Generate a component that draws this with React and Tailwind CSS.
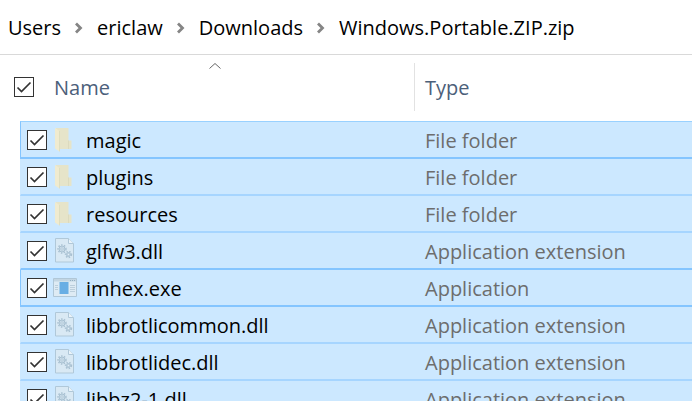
import { Fragment } from "react";

const crumbs = ["Users", "ericlaw", "Downloads", "Windows.Portable.ZIP.zip"];

const files = [
  { name: "magic", type: "File folder", kind: "folder", outlined: true },
  { name: "plugins", type: "File folder", kind: "folder" },
  { name: "resources", type: "File folder", kind: "folder" },
  { name: "glfw3.dll", type: "Application extension", kind: "dll" },
  { name: "imhex.exe", type: "Application", kind: "exe", outlined: true },
  { name: "libbrotlicommon.dll", type: "Application extension", kind: "dll" },
  { name: "libbrotlidec.dll", type: "Application extension", kind: "dll" },
  { name: "libbz2-1.dll", type: "Application extension", kind: "dll" },
];

function Checkbox({ label }) {
  return (
    <span className="relative block size-5 shrink-0">
      <input
        type="checkbox"
        defaultChecked
        aria-label={label}
        className="peer block size-5 appearance-none border border-[#333] bg-white"
      />
      <svg viewBox="0 0 20 20" className="pointer-events-none absolute inset-0 hidden size-5 peer-checked:block" aria-hidden="true">
        <path d="M3.5 10.5 7.5 14.5 16.5 5.5" fill="none" stroke="#333" strokeWidth="1.700" />
      </svg>
    </span>
  );
}

function FolderIcon() {
  return (
    <svg viewBox="0 0 24 26" className="h-[26px] w-6" aria-hidden="true">
      <path d="M3 1h12.500v12.500H18.500V22H6z" fill="#e6e4c9" />
      <path d="M15.500 13.500v8.500" stroke="#d8d7bd" strokeWidth="0.800" />
      <path d="M2 1 6.500 4v20.500L2 21.500z" fill="#f0ebcf" />
      <path d="M6.500 4v20.500" stroke="#dcdabd" strokeWidth="0.800" />
    </svg>
  );
}

function Gear({ x, y, r }) {
  return (
    <g transform={`translate(${x} ${y})`} fill="none" stroke="#a9c1d2">
      <circle r={r + 1} strokeWidth="1.400" strokeDasharray="1.500 1.400" />
      <circle r={r} strokeWidth="1" fill="#c9dce9" />
      <circle r="1.200" fill="#e1eff9" strokeWidth="0.800" />
    </g>
  );
}

function DllIcon() {
  return (
    <svg viewBox="0 0 24 26" className="h-[26px] w-6" aria-hidden="true">
      <path d="M2.500 .5h13l5 5v18.500h-18z" fill="#d9e9f4" stroke="#b0c8d9" />
      <path d="M15.500 .5v5h5" fill="#e9f3fa" stroke="#b0c8d9" />
      <Gear x={9} y={11} r={3} />
      <Gear x={15.500} y={16.500} r={2} />
    </svg>
  );
}

function ExeIcon() {
  return (
    <svg viewBox="0 0 24 26" className="h-[26px] w-6" aria-hidden="true">
      <path d="M.5 3.500h23v18H.5z" fill="#deebf4" stroke="#b0c7d7" />
      <path d="M1 4h22v2.500H1z" fill="#c3d6e3" />
      <path d="M17 5.500h1m1 0h1m1 0h1" stroke="#94afc2" />
      <path d="M6.500 7h9v12h-9z" fill="#69aee4" />
      <path d="M2 10.500h3m-3 2h3m-3 2h3m12-4h5m-5 2h5m-5 2h5m-5 2h5" stroke="#bccfdc" />
    </svg>
  );
}

const icons = { folder: FolderIcon, dll: DllIcon, exe: ExeIcon };

export default function App() {
  return (
    <main className="h-screen overflow-hidden bg-white font-['Open_Sans','Noto_Sans',sans-serif] text-xl leading-7 text-black">
      <nav aria-label="Path" className="flex h-[55px] items-center gap-3.5 border-b border-[#d9d9d9] pt-0.5 pl-2">
        {crumbs.map((crumb, i) => (
          <Fragment key={crumb}>
            {i > 0 && (
              <svg viewBox="0 0 8 12" className="h-3 w-2 shrink-0" aria-hidden="true">
                <path d="M1 1.500 5.500 6 1 10.500" fill="none" stroke="#858585" strokeWidth="2.800" />
              </svg>
            )}
            <a href="#path" className="whitespace-nowrap">{crumb}</a>
          </Fragment>
        ))}
      </nav>
      <table className="w-full table-fixed border-collapse">
        <thead>
          <tr className="h-[66px] text-[#4c607a]">
            <th scope="col" className="relative w-[414px] p-0 font-normal">
              <div className="flex items-center gap-5 pb-0.5 pl-3.5">
                <Checkbox label="Select all" />
                <span className="pt-0.5">Name</span>
              </div>
              <svg viewBox="0 0 12 6" className="absolute top-2 left-[209px] h-1.5 w-3" aria-hidden="true">
                <path d="M.5 5.500 6 .5l5.500 5" fill="none" stroke="#666" />
              </svg>
            </th>
            <th scope="col" className="p-0 pb-0.5 text-left font-normal">
              <div className="flex h-12 items-center border-l border-[#e2e2e2] pt-0.5 pl-2.5">Type</div>
            </th>
          </tr>
        </thead>
      </table>
      <div className="pl-5">
        <table className="w-full table-fixed border-separate border-spacing-0 bg-[#cce8ff]">
          <tbody>
            {files.map(({ name, type, kind, outlined }, i) => {
              const Icon = icons[kind];
              const strongEdge = outlined || files[i + 1]?.outlined;
              return (
                <tr
                  key={name}
                  className={
                    strongEdge
                      ? "h-[37px] first:h-[38px] *:border-b-2 *:border-[#84c5ff] first:*:border-t first:*:border-t-[#99d1ff]"
                      : "h-[37px] *:border-b-2 *:border-[#a6d5ff]"
                  }
                >
                  <td className={outlined ? "w-[405px] border-l p-0" : "w-[405px] border-l border-l-[#cce8ff]! p-0"}>
                    <div className="flex items-center pl-1.5">
                      <Checkbox label={name} />
                      <span className="mr-[9px] ml-1.5"><Icon /></span>
                      <span className="pt-0.5">{name}</span>
                    </div>
                  </td>
                  <td className="p-0 pt-0.5 text-[#6d6d6d]">{type}</td>
                </tr>
              );
            })}
          </tbody>
        </table>
      </div>
    </main>
  );
}
